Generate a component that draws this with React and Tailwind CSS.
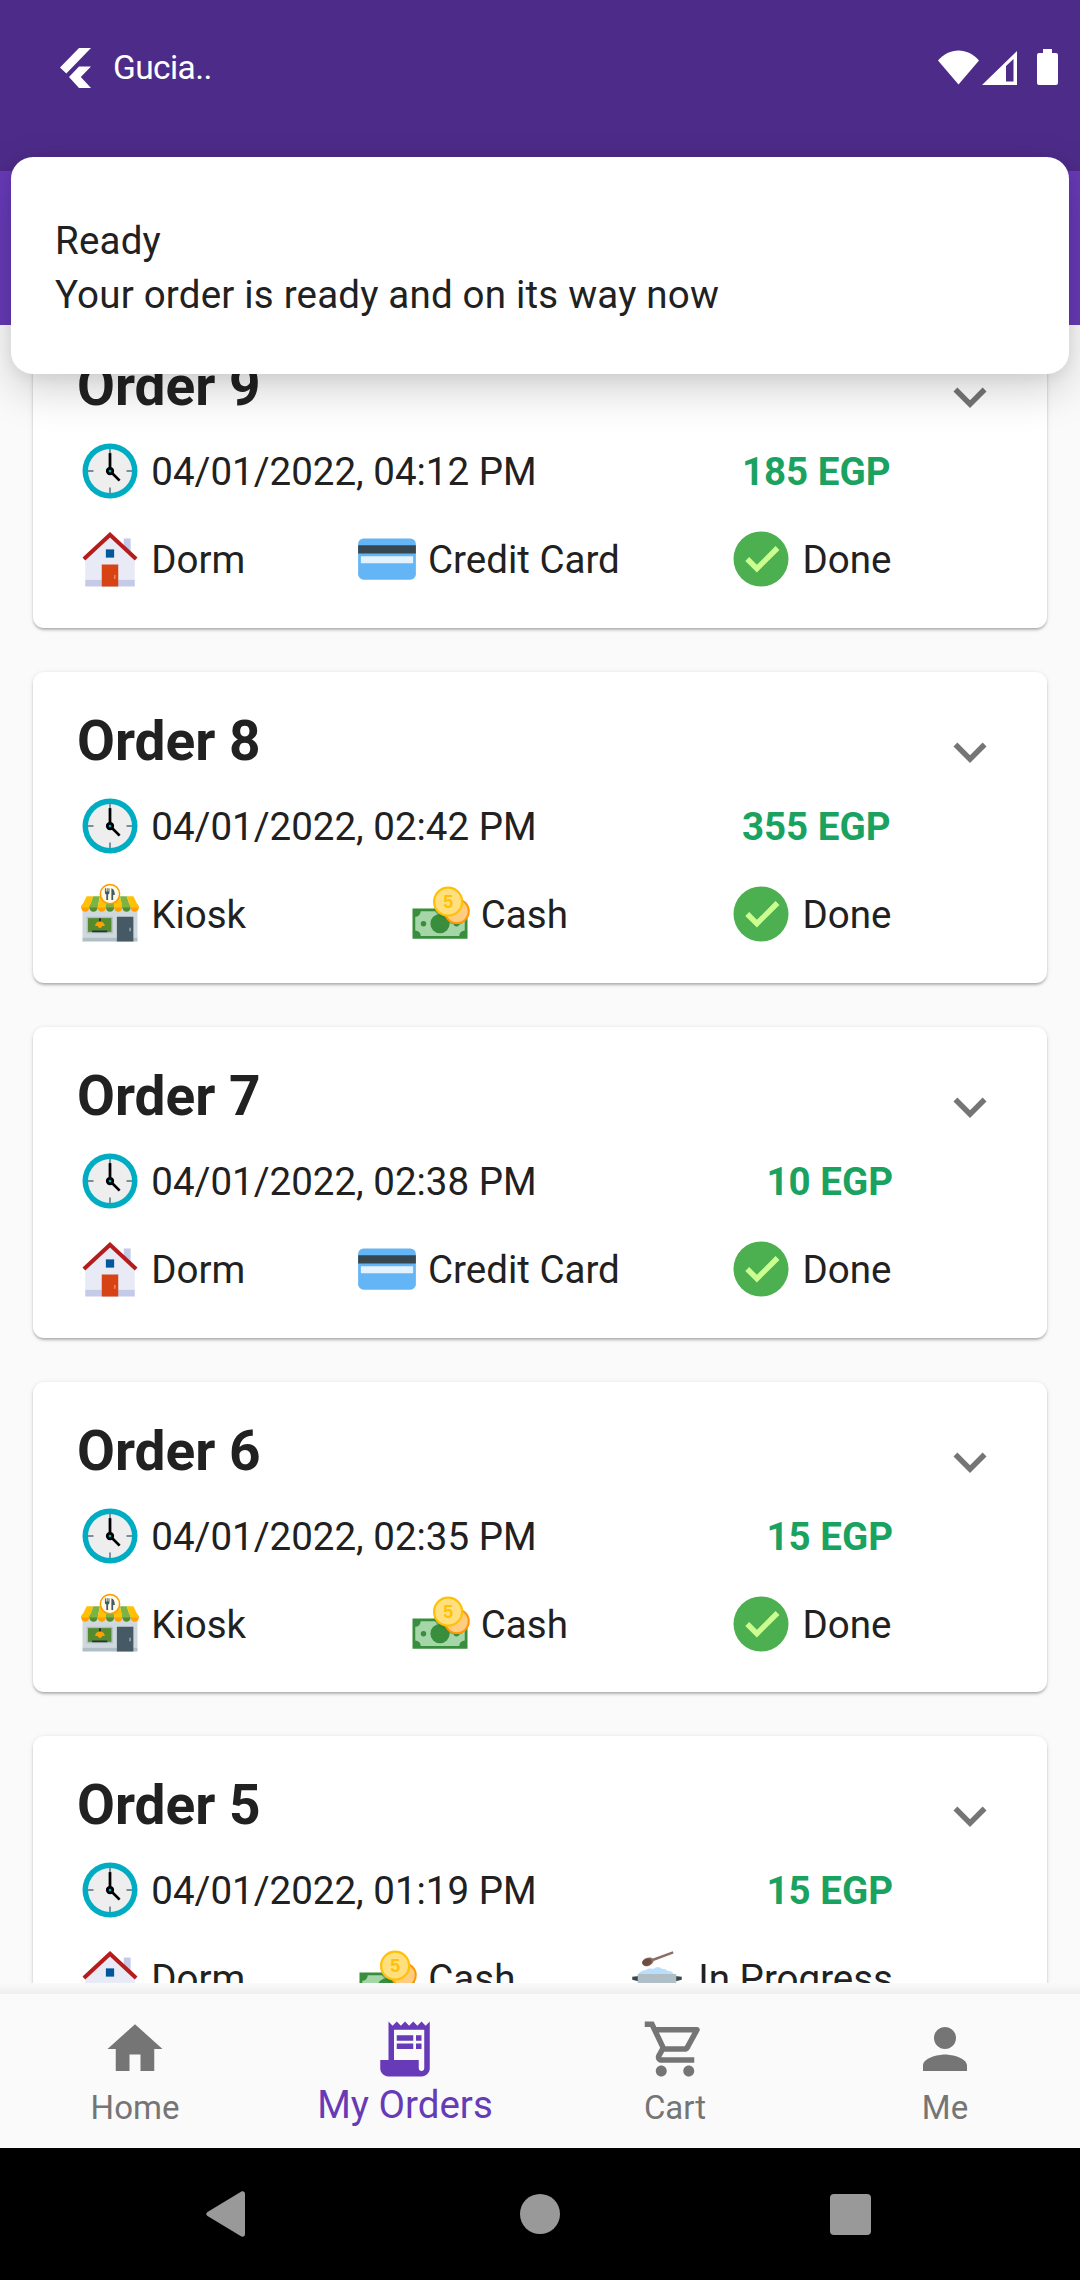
import React from "react";

const ORDERS = [
  { id: 9, date: "04/01/2022, 04:12 PM", price: "185 EGP", place: "Dorm", pay: "Credit Card", status: "Done" },
  { id: 8, date: "04/01/2022, 02:42 PM", price: "355 EGP", place: "Kiosk", pay: "Cash", status: "Done" },
  { id: 7, date: "04/01/2022, 02:38 PM", price: "10 EGP", place: "Dorm", pay: "Credit Card", status: "Done" },
  { id: 6, date: "04/01/2022, 02:35 PM", price: "15 EGP", place: "Kiosk", pay: "Cash", status: "Done" },
  { id: 5, date: "04/01/2022, 01:19 PM", price: "15 EGP", place: "Dorm", pay: "Cash", status: "In Progress" },
];

function Pic({ children }) {
  return (
    <svg viewBox="0 0 48 48" className="h-[66px] w-[66px] shrink-0">
      {children}
    </svg>
  );
}

function ClockIcon() {
  return (
    <Pic>
      <circle cx="24" cy="24" r="20" fill="#00acc1" />
      <circle cx="24" cy="24" r="16" fill="#eeeeee" />
      <path d="M8 23.300h4v1.400H8zM36 23.300h4v1.400h-4zM23.300 36h1.400v4h-1.400zM23.300 8h1.400v4h-1.400z" fill="#78909c" />
      <path d="M23 11h2v13h-2z" fill="#000" />
      <path d="M31.700 30.300l-1.400 1.400-7-7 1.400-1.400z" fill="#000" />
      <circle cx="24" cy="24" r="3" fill="#000" />
      <circle cx="24" cy="24" r="1" fill="#00acc1" />
    </Pic>
  );
}

function DormIcon() {
  return (
    <Pic>
      <path d="M42 39H6V23L24 6l18 17z" fill="#e8eaf6" />
      <path d="M39 21l-5-5V9h5zM6 39h36v5H6z" fill="#c5cae9" />
      <path d="M24 4.3L4 22.9l2 2.2L24 8.4l18 16.7 2-2.2z" fill="#b71c1c" />
      <path d="M18 28h12v16H18z" fill="#d84315" />
      <path d="M21 17h6v6h-6z" fill="#01579b" />
      <path d="M27.5 35.5c-.3 0-.5.2-.5.5v2c0 .3.2.5.5.5s.5-.2.5-.5v-2c0-.3-.2-.5-.5-.5z" fill="#ff8a65" />
    </Pic>
  );
}

function KioskIcon() {
  const stripes = [0, 1, 2, 3, 4, 5, 6];
  return (
    <Pic>
      <path d="M4 19h40v22H4z" fill="#cfd8dc" />
      <path d="M4 41h40v3H4z" fill="#b0bec5" />
      <path d="M29 26h12v18H29z" fill="#455a64" />
      <path d="M7 26h19v12H7z" fill="#b0bec5" />
      <path d="M8 27h17v10H8z" fill="#558b2f" />
      <path d="M16 27h1.4v3H16zM11 36h11v1.2H11z" fill="#263238" />
      <path d="M13.2 32.8c0-2 1.6-3.4 3.5-3.4s3.5 1.4 3.5 3.4h-2c0 .8-.7 1.4-1.5 1.4s-1.500-.6-1.500-1.400z" fill="#ffa000" />
      <path d="M38 34h1.200v2.500H38z" fill="#90a4ae" />
      {stripes.map((i) => (
        <g key={i}>
          <circle cx={6 + i * 6} cy="19.300" r="3" fill={i % 2 ? "#558b2f" : "#ffa000"} />
          <path
            d={`M${3 + i * 6} 19.300L${7 + i * 4.86} 11H${11.86 + i * 4.86}L${9 + i * 6} 19.300z`}
            fill={i % 2 ? "#7cb342" : "#ffc107"}
          />
        </g>
      ))}
      <circle cx="24" cy="9.500" r="7" fill="#fffde7" stroke="#ff9800" strokeWidth="1.100" />
      <path d="M20.300 5.300h.700v2.400h.6V5.300h.7v2.400h.600V5.300h.7v3c0 .9-.5 1.300-1 1.500v4h-1.300v-4c-.5-.2-1-.6-1-1.500zM25 5.300c1.700.4 2.500 2.300 2.500 4.800h-1.200v3.700H25z" fill="#455a64" />
    </Pic>
  );
}

function CardIcon() {
  return (
    <Pic>
      <rect x="3" y="9" width="42" height="30" rx="4" fill="#64b5f6" />
      <path d="M3 14h42v6H3z" fill="#37474f" />
      <path d="M5 22h38v5H5z" fill="#e3f2fd" />
    </Pic>
  );
}

function CashIcon() {
  return (
    <Pic>
      <path d="M4 20h40v22H4z" fill="#388e3c" />
      <path d="M10 22h28a4 4 0 0 0 4 4v10a4 4 0 0 0-4 4H10a4 4 0 0 0-4-4V26a4 4 0 0 0 4-4z" fill="#a5d6a7" />
      <circle cx="24" cy="31" r="7" fill="#388e3c" />
      <circle cx="12" cy="31" r="2" fill="#388e3c" />
      <circle cx="36" cy="31" r="2" fill="#388e3c" />
      <path d="M19.500 20a11 11 0 0 0 8.500 7.600 9.500 9.500 0 0 0 12 3.400l1.500-11z" fill="#2e7d32" opacity=".5" />
      <circle cx="36.200" cy="22" r="8.700" fill="#ffcc80" stroke="#ff9800" strokeWidth="1.500" />
      <circle cx="29.900" cy="15" r="10.200" fill="#ffdf7e" stroke="#ffc107" strokeWidth="1.600" />
      <text x="29.900" y="19.600" textAnchor="middle" fontFamily="Liberation Sans, sans-serif" fontWeight="700" fontSize="13" fill="#ffc107">
        5
      </text>
    </Pic>
  );
}

function DoneIcon() {
  return (
    <Pic>
      <circle cx="24" cy="24" r="20" fill="#4caf50" />
      <path d="M34.602 14.602L21 28.199l-5.602-5.598-2.797 2.797L21 33.801l16.398-16.402z" fill="#ccff90" />
    </Pic>
  );
}

function PotIcon() {
  return (
    <Pic>
      <path d="M10.500 21.500c.5-2 3-3 5.500-3.300 1.500-1.500 4-1 5.500-.8 1-1.600 4.500-1.800 6-.2 2 0 3.500.6 4 1.500 2.500 0 4.500 1.300 5 2.800z" fill="#bbdefb" />
      <path d="M6 23l5 -.5v4L6 25.200zM42 23l-5-.5v4l5-1.300z" fill="#37474f" />
      <path d="M10 21h28v17a4 4 0 0 1-4 4H14a4 4 0 0 1-4-4z" fill="#b0bec5" />
      <path d="M20 10.200L35.500 4.500l.500 1.700L20.600 12z" fill="#8d6e63" />
      <ellipse cx="17.300" cy="12.200" rx="4.300" ry="3" transform="rotate(-20 17.300 12.200)" fill="#8d6e63" />
      <ellipse cx="16.700" cy="12.500" rx="3.400" ry="2.400" transform="rotate(-20 16.700 12.500)" fill="#6d4c41" />
    </Pic>
  );
}

const PICTURES = {
  Dorm: DormIcon,
  Kiosk: KioskIcon,
  "Credit Card": CardIcon,
  Cash: CashIcon,
  Done: DoneIcon,
  "In Progress": PotIcon,
};

function Labelled({ icon: Icon, text }) {
  return (
    <div className="flex items-center gap-[8.25px]">
      <Icon />
      <span className="whitespace-nowrap pt-[2px]">{text}</span>
    </div>
  );
}

function OrderCard({ order }) {
  return (
    <article className="flex h-[310.75px] shrink-0 justify-between rounded-[11px] bg-white px-[44px] pt-[37px] shadow-[0_3px_3px_-1px_rgba(0,0,0,0.2),0_1px_3px_rgba(0,0,0,0.14),0_1px_6px_rgba(0,0,0,0.06)]">
      <div className="flex w-[816px] flex-col text-[38.5px] leading-[54px]">
        <h2 className="text-[55px] font-bold leading-[64px]">Order {order.id}</h2>
        <div className="mt-[20px] flex items-center justify-between">
          <Labelled icon={ClockIcon} text={order.date} />
          <span className={order.price.length > 6 ? "pr-[2.5px] pt-[2px] font-bold text-[#1aa260]" : "pt-[2px] font-bold text-[#1aa260]"}>
            {order.price}
          </span>
        </div>
        <div className={order.status === "Done" ? "mt-[22px] flex items-center justify-between pr-[1.5px]" : "mt-[22px] flex items-center justify-between"}>
          <Labelled icon={PICTURES[order.place]} text={order.place} />
          <Labelled icon={PICTURES[order.pay]} text={order.pay} />
          <Labelled icon={PICTURES[order.status]} text={order.status} />
        </div>
      </div>
      <svg viewBox="0 0 24 24" className="mt-[10px] h-[66px] w-[66px] shrink-0" fill="#757575">
        <path d="M16.590 8.590L12 13.170 7.410 8.590 6 10l6 6 6-6z" />
      </svg>
    </article>
  );
}

const TABS = [
  { label: "Home", d: "M10 20v-6h4v6h5v-8h3L12 3 2 12h3v8z" },
  {
    label: "My Orders",
    active: true,
    d: "M19.500 3.500L18 2l-1.500 1.500L15 2l-1.500 1.500L12 2l-1.500 1.500L9 2 7.500 3.500 6 2v14H3v3c0 1.660 1.340 3 3 3h12c1.660 0 3-1.340 3-3V2l-1.500 1.500zM19 19c0 .55-.45 1-1 1s-1-.45-1-1v-3H8V5h11v14zM9 7h6v2H9zM16 7h2v2h-2zM9 10h6v2H9zM16 10h2v2h-2z",
  },
  {
    label: "Cart",
    d: "M15.550 13c.75 0 1.410-.41 1.750-1.030l3.580-6.490c.37-.66-.11-1.480-.87-1.480H5.210l-.94-2H1v2h2l3.600 7.590-1.350 2.440C4.520 15.370 5.480 17 7 17h12v-2H7l1.100-2h7.450zM6.160 6h12.150l-2.760 5H8.530L6.160 6zM7 18c-1.100 0-1.990.9-1.990 2S5.900 22 7 22s2-.9 2-2-.9-2-2-2zm10 0c-1.100 0-1.990.9-1.990 2s.89 2 1.990 2 2-.9 2-2-.9-2-2-2z",
  },
  { label: "Me", d: "M12 12c2.210 0 4-1.790 4-4s-1.790-4-4-4-4 1.790-4 4 1.790 4 4 4zm0 2c-2.670 0-8 1.340-8 4v2h16v-2c0-2.660-5.330-4-8-4z" },
];

function StatusBar() {
  return (
    <header className="flex h-[171px] items-start justify-between bg-[#4d2b89] pl-[60px] pr-[22px] pt-[48px] text-white">
      <div className="flex items-start gap-[22px]">
        <svg viewBox="0 0 31 40" className="h-[40px] w-[31px]" fill="currentColor">
          <path d="M19 0h12L6.300 25.500 0 19.500zM19 18.500h12L20.800 29 31 40H19L9 29z" />
        </svg>
        <span className="text-[33.5px] leading-[40px] tracking-[-0.6px]">Gucia..</span>
      </div>
      <svg viewBox="0 0 120 38" className="h-[38px] w-[120px]" fill="currentColor">
        <path d="M0 12.500C11 -1 30 -1 41 12.500L20.500 36.500z" />
        <path fillRule="evenodd" d="M44 37L79 3v34zM68 18v15.500h7.500V11z" />
        <path d="M105 1h9v4h4a2 2 0 0 1 2 2v28a2 2 0 0 1-2 2h-17a2 2 0 0 1-2-2V7a2 2 0 0 1 2-2h4z" />
      </svg>
    </header>
  );
}

export default function App() {
  return (
    <div className="relative flex h-[2280px] w-[1080px] flex-col overflow-hidden bg-[#fafafa] font-['Roboto',sans-serif] text-[#212121]">
      <StatusBar />
      <div className="h-[154px] bg-[#673ab7]" />
      <main className="flex h-[1658px] flex-col overflow-hidden px-[33px]">
        <div className="-mt-[7.75px] flex flex-col gap-[44px]">
          {ORDERS.map((o) => (
            <OrderCard key={o.id} order={o} />
          ))}
        </div>
      </main>
      <div className="h-[11px] bg-gradient-to-b from-[#fafafa] to-[#efefef]" />
      <nav className="grid h-[154px] grid-cols-4 bg-[#fafafa]">
        {TABS.map((t) => (
          <div
            key={t.label}
            className={
              t.active
                ? "flex flex-col items-center pt-[22px] text-[38.5px] leading-[46px] text-[#673ab7]"
                : "flex flex-col items-center pt-[22px] text-[33px] leading-[52px] text-[#757575]"
            }
          >
            <svg viewBox="0 0 24 24" className="h-[66px] w-[66px]" fill="currentColor">
              <path d={t.d} />
            </svg>
            <span>{t.label}</span>
          </div>
        ))}
      </nav>
      <footer className="flex h-[132px] items-center justify-between bg-black pl-[206px] pr-[209px] text-[#999999]">
        <svg viewBox="0 0 39 46" className="h-[46px] w-[39px]" fill="currentColor">
          <path d="M1.500 21L35 .8c2-1.200 4 0 4 2v40.400c0 2-2 3.200-4 2L1.500 25c-1.700-1-1.700-3 0-4z" />
        </svg>
        <div className="ml-[5px] h-[40px] w-[40px] rounded-full bg-[#999999]" />
        <div className="h-[41px] w-[41px] rounded-[4px] bg-[#999999]" />
      </footer>

      <section className="absolute left-[11px] top-[157px] flex h-[217px] w-[1058px] flex-col justify-center rounded-[22px] bg-white px-[44px] pt-[4px] text-[38.5px] leading-[54px] tracking-[0.2px] shadow-[0_16px_44px_rgba(0,0,0,0.18),0_4px_14px_rgba(0,0,0,0.06)]">
        <p>Ready</p>
        <p>Your order is ready and on its way now</p>
      </section>
    </div>
  );
}
